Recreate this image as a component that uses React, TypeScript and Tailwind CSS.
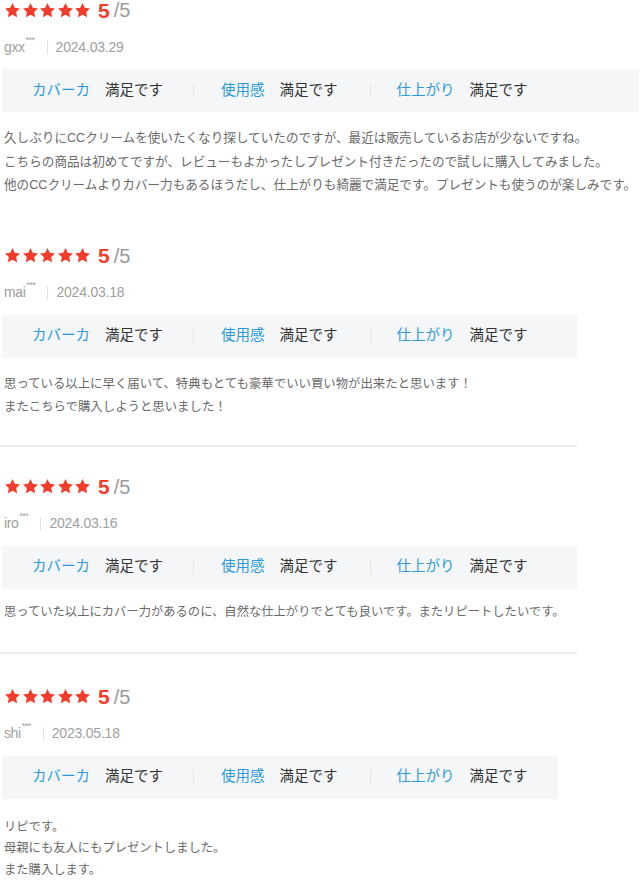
import React from "react";

type Review = {
  user: string;
  date: string;
  lines: string[];
  boxWidth: string;
  pt: string;
  textMt: string;
  textCls: string;
  divider: string | null;
};

const reviews: Review[] = [
  {
    user: "gxx",
    date: "2024.03.29",
    lines: [
      "久しぶりにCCクリームを使いたくなり探していたのですが、最近は販売しているお店が少ないですね。",
      "こちらの商品は初めてですが、レビューもよかったしプレゼント付きだったので試しに購入してみました。",
      "他のCCクリームよりカバー力もあるほうだし、仕上がりも綺麗で満足です。プレゼントも使うのが楽しみです。",
    ],
    boxWidth: "w-[637px]",
    pt: "pt-0",
    textMt: "mt-[15px]",
    textCls: "text-[12.6px] leading-[23.5px]",
    divider: null,
  },
  {
    user: "mai",
    date: "2024.03.18",
    lines: [
      "思っている以上に早く届いて、特典もとても豪華でいい買い物が出来たと思います！",
      "またこちらで購入しようと思いました！",
    ],
    boxWidth: "w-[575px]",
    pt: "pt-[48px]",
    textMt: "mt-[15px]",
    textCls: "text-[12.4px] leading-[23px]",
    divider: "mt-[26px]",
  },
  {
    user: "iro",
    date: "2024.03.16",
    lines: ["思っていた以上にカバー力があるのに、自然な仕上がりでとても良いです。またリピートしたいです。"],
    boxWidth: "w-[575px]",
    pt: "pt-[30px]",
    textMt: "mt-[12px]",
    textCls: "text-[12.3px] leading-[23px]",
    divider: "mt-[28px]",
  },
  {
    user: "shi",
    date: "2023.05.18",
    lines: ["リピです。", "母親にも友人にもプレゼントしました。", "また購入します。"],
    boxWidth: "w-[556px]",
    pt: "pt-[33px]",
    textMt: "mt-[18px]",
    textCls: "text-[12.3px] leading-[21.5px]",
    divider: null,
  },
];

const Star = () => (
  <svg viewBox="0 0 24 24" className="w-[17px] h-[17px]" fill="#f23c2c">
    <path d="M12 1.5l3.2 6.6 7.3 1-5.3 5.1 1.3 7.2L12 17.9l-6.5 3.5 1.3-7.2L1.5 9.1l7.3-1z" />
  </svg>
);

function Attr({ label }: { label: string }) {
  return (
    <div className="flex items-center">
      <span className="text-[#2b9ad8]">{label}</span>
      <span className="ml-[15px] text-[#333]">満足です</span>
    </div>
  );
}

function ReviewBlock({ r }: { r: Review }) {
  return (
    <div className={r.pt}>
      <div className="flex items-center h-[20px] pl-[4px]">
        <div className="flex items-center gap-[0.5px]">
          <Star />
          <Star />
          <Star />
          <Star />
          <Star />
        </div>
        <span className="ml-[7px] text-[21px] font-bold text-[#f23c2c] leading-none">5</span>
        <span className="ml-[4px] text-[20px] text-[#9a9a9a] leading-none">/5</span>
      </div>
      <div className="flex items-center h-[16px] mt-[19px] pl-[4px] text-[#a0a0a0]">
        <span className="flex items-start text-[14px] tracking-[-0.4px]">
          {r.user}
          <span className="text-[9px] leading-none -mt-[1px] ml-[1px] tracking-[-0.5px]">***</span>
        </span>
        <span className="ml-[12px] mr-[8px] w-px h-[14px] bg-[#e2e2e2]" />
        <span className="text-[14px] tracking-[-0.2px]">{r.date}</span>
      </div>
      <div
        className={`${r.boxWidth} mt-[14px] ml-[2px] h-[43px] bg-[#f5f6f8] flex items-center pl-[30px] text-[14.5px]`}
      >
        <Attr label="カバーカ" />
        <span className="ml-[30px] mr-[27px] w-px h-[14px] bg-[#e4e4e4]" />
        <Attr label="使用感" />
        <span className="ml-[32px] mr-[26px] w-px h-[14px] bg-[#e4e4e4]" />
        <Attr label="仕上がり" />
      </div>
      <div className={`${r.textMt} ${r.textCls} pl-[4px] text-[#6a6a6a] whitespace-nowrap`}>
        {r.lines.map((l) => (
          <div key={l}>{l}</div>
        ))}
      </div>
      {r.divider && <div className={`${r.divider} w-[577px] h-[2px] bg-[#ececec]`} />}
    </div>
  );
}

export default function App() {
  return (
    <div
      className="w-[640px] h-[883px] overflow-hidden bg-white"
      style={{ fontFamily: '"Liberation Sans", "Noto Sans CJK JP", sans-serif' }}
    >
      {reviews.map((r) => (
        <ReviewBlock key={r.user} r={r} />
      ))}
    </div>
  );
}
